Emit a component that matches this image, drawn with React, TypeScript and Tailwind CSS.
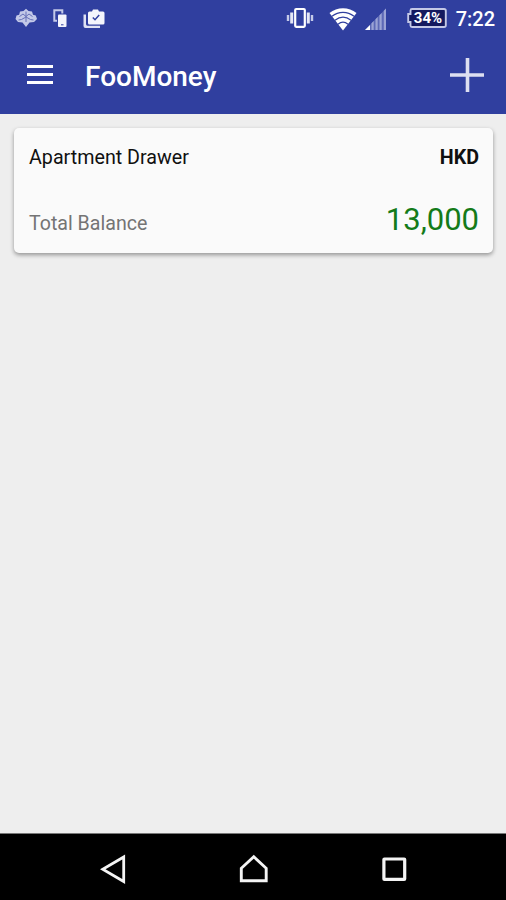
import React from 'react';

function StatusBar() {
  return (
    <div className="flex h-[37px] items-start justify-between pt-[7px] pr-[11px] pl-[15px]">
      <div className="flex">
        <svg className="mr-[14px] h-6 w-6" viewBox="0 0 24 24" fill="none">
          <path d="M11 1.800 13.500 4 17 4.500l1 3.200 2.800.8L22 12l-3 3-4.500.5L11 20l-3.500-4.500L3 15l-2.500-3 1-3.500L4.200 7.700 5 4.500 8.500 4z" fill="#c3c9e8" />
          <path d="M4.500 9.500 8 7l3 2.500L14 7l3.500 2.500M6.500 12.500 11 10l4.500 2.500M3.500 13l3-.5M18.500 13l-3-.5M11 4.500V15" stroke="#6771b8" strokeWidth="1" />
        </svg>
        <svg className="mr-[12px] h-6 w-[18px]" viewBox="0 0 18 24" fill="none">
          <path d="M9.300 6.500V3.200H1.300v10.500H4" stroke="#c3c9e8" strokeWidth="2" />
          <rect x="5" y="7.500" width="8.500" height="12.500" rx="1" fill="#f4f5fc" />
          <path d="M8 17.800h2.500" stroke="#303f9f" strokeWidth="1" />
        </svg>
        <svg className="h-6 w-6" viewBox="0 0 24 24" fill="none">
          <path d="M1.500 7.500h-1V19q0 2 2 2H17v-2.200H4.500Q3 18.800 3 17V7.500z" fill="#dfe2f3" />
          <path d="M9 4.500 10 2.500h5l1 2h4q1.500 0 1.500 1.500v10q0 1.500-1.500 1.500H6.500Q5 17.500 5 16V6q0-1.500 1.500-1.500z" fill="#f4f5fc" />
          <path d="m9.800 10.500 2.200 2.200 4.200-4.700" stroke="#303f9f" strokeWidth="1.500" />
        </svg>
      </div>
      <div className="flex">
        <svg className="mr-[15px] h-[22px] w-[28px]" viewBox="0 0 28 22" fill="none">
          <rect x="9.200" y="2" width="9.600" height="17.800" rx="1" stroke="white" strokeWidth="2.200" />
          <path d="M5.700 5.500v11M22.300 5.500v11" stroke="#e4e7f6" strokeWidth="3" />
          <path d="M2 8v6M26 8v6" stroke="#c4cae8" strokeWidth="2.400" />
        </svg>
        <svg className="mr-[8px] h-6 w-7" viewBox="0 0 28 24" fill="none">
          <path d="M14 23.500.500 6C8-.300 20-.300 27.500 6z" fill="white" />
          <path d="M3 9.300C9.500 4 18.500 4 25 9.300M6 13.200c5-3.800 11-3.800 16 0M9 17.200c3-2.500 7-2.500 10 0" stroke="#303f9f" strokeWidth="1.200" />
        </svg>
        <svg className="mr-[20px] h-6 w-[22px]" viewBox="0 0 22 24" fill="none">
          <path d="M0 23 21 1.500V23z" fill="#5d69b6" />
          <path d="M6.500 16.300V23h2.200v-9zM10.500 12.200V23h2.200V10zM14.500 8.200V23h2.200V6zM18.800 3.800V23H21V1.500z" fill="#9ba3d5" />
          <path d="m0 23 5-5v5z" fill="#fff" />
        </svg>
        <div className="relative mr-[10px] h-[22px] w-[40px]">
          <svg className="h-[22px] w-[40px]" viewBox="0 0 40 22">
            <path d="M5 2h32q1.800 0 1.800 1.800v14.400Q38.800 20 37 20H5q-1.500 0-1.500-1.500V15H1.200V7h2.300V3.500Q3.500 2 5 2z" fill="#14195f" stroke="#c3c8e6" strokeWidth="1.900" />
          </svg>
          <span className="absolute inset-y-0 right-[2px] left-[4px] flex items-center justify-center text-[15px] leading-none font-bold text-white">34%</span>
        </div>
        <span className="mt-px flex h-[22px] w-[38px] justify-end text-[20px] leading-[22px] font-medium whitespace-nowrap text-white">7:22</span>
      </div>
    </div>
  );
}

function AppBar() {
  return (
    <header className="flex h-[77px] items-start pr-[22px] pl-[27px]">
      <button aria-label="Menu" className="mt-[28px] flex w-[26px] flex-col gap-[5px]">
        <span className="h-[3px] w-full bg-white" />
        <span className="h-[3px] w-full bg-white" />
        <span className="h-[3px] w-full bg-white" />
      </button>
      <h1 className="mt-[24px] ml-[32px] text-[28px] leading-8 font-medium text-white">FooMoney</h1>
      <button aria-label="Add" className="mt-[21px] ml-auto">
        <svg className="h-[34px] w-[34px]" viewBox="0 0 34 34">
          <path d="M17.500 0v34M0 17h34" stroke="#dddff1" strokeWidth="3.600" />
        </svg>
      </button>
    </header>
  );
}

function AccountCard() {
  return (
    <section className="mt-[14px] mr-[13px] ml-[14px] flex h-[125px] flex-col justify-between rounded-[5px] bg-[#fafafa] pt-[18px] pr-[14px] pb-[14px] pl-[15px] shadow-[0_2px_4px_rgba(0,0,0,0.38)]">
      <div className="flex items-center justify-between leading-6">
        <span className="text-[19.700px] text-[#101010]">Apartment Drawer</span>
        <span className="text-[19.700px] font-bold text-[#101010]">HKD</span>
      </div>
      <div className="flex items-end justify-between">
        <span className="text-[19.600px] leading-[31px] text-[#747474]">Total Balance</span>
        <span className="text-[31px] leading-[38px] text-[#147b19]">13,000</span>
      </div>
    </section>
  );
}

function NavigationBar() {
  return (
    <nav className="flex h-[67px] items-start justify-between border-t border-[#777] bg-black pt-[20px] pr-[99px] pl-[100px]">
      <svg className="h-[30px] w-[27px]" viewBox="0 0 27 30" fill="none" stroke="#f4f4f4" strokeWidth="2.800">
        <path d="M23.700 3v24.500L2.700 15.200z" />
      </svg>
      <svg className="h-[30px] w-[30px]" viewBox="0 0 30 30" fill="none" stroke="#f4f4f4" strokeWidth="2.900">
        <path d="M14.800 2.800 27.200 14.300v12.400H2.300V14.300z" />
      </svg>
      <svg className="h-[30px] w-[27px]" viewBox="0 0 27 30" fill="none" stroke="#f4f4f4" strokeWidth="3.200">
        <rect x="3.900" y="5" width="20.800" height="20.400" rx=".5" />
      </svg>
    </nav>
  );
}

export default function App() {
  return (
    <div className="flex h-screen w-full flex-col overflow-hidden bg-[#eeeeee] font-['Roboto',sans-serif]">
      <div className="bg-[#303f9f]">
        <StatusBar />
        <AppBar />
      </div>
      <main className="flex-1">
        <AccountCard />
      </main>
      <NavigationBar />
    </div>
  );
}
